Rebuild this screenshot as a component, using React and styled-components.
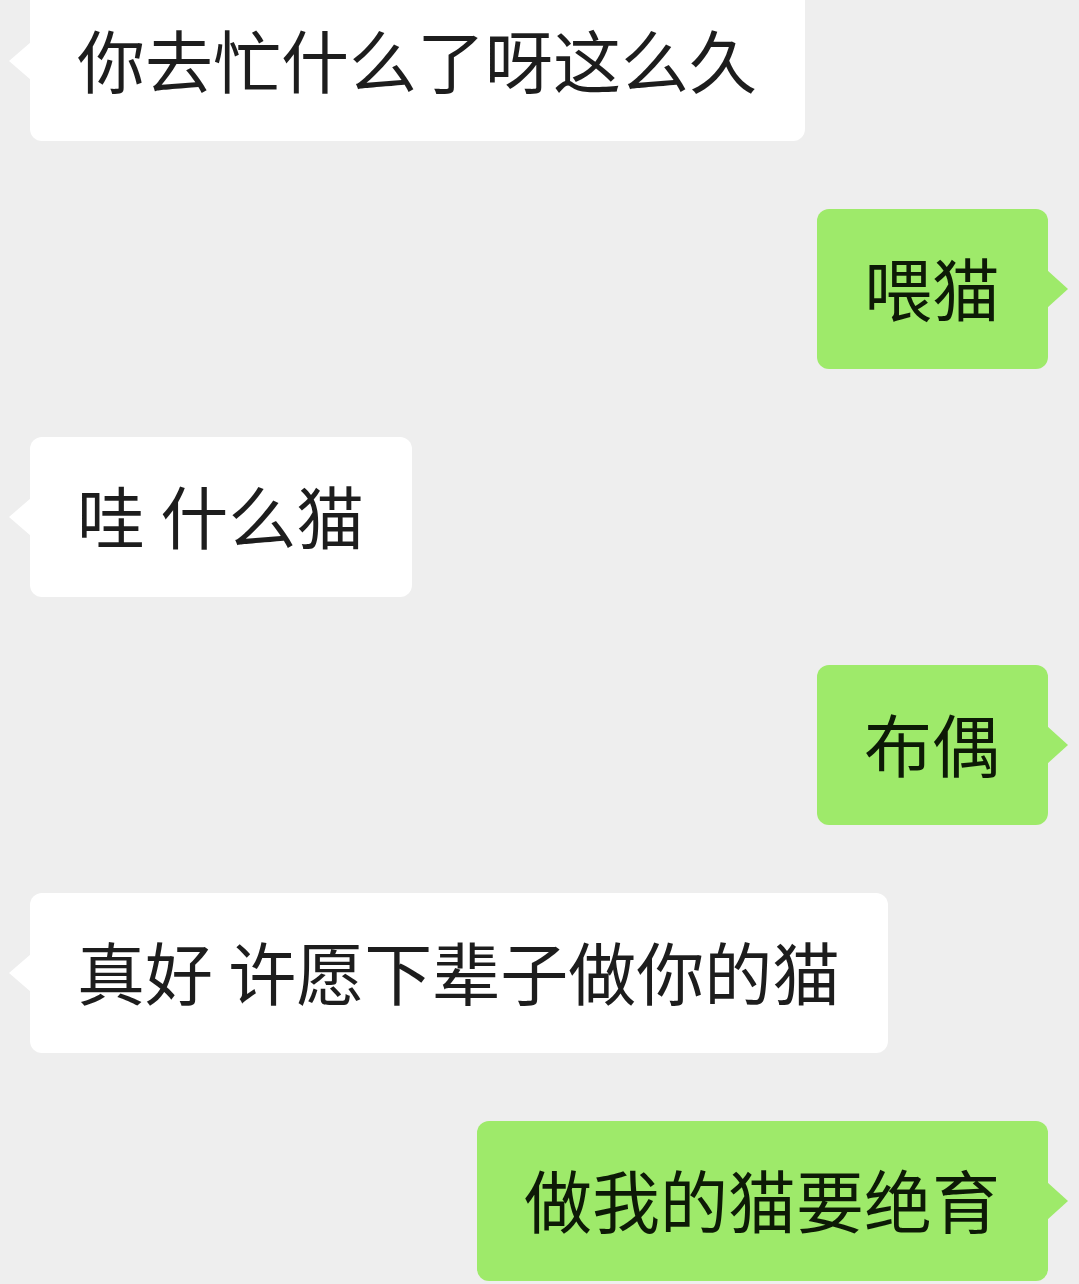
import React from 'react'
import styled, { createGlobalStyle } from 'styled-components'

const GlobalStyle = createGlobalStyle`
  html, body {
    margin: 0;
    padding: 0;
    background: #eeeeee;
  }
`

//---------------- chat column ----------------//
const Chat = styled.div`
  width: 1079px;
  height: 1284px;
  overflow: hidden;
  background: #eeeeee;
  font-family: "Noto Sans CJK SC", "Noto Sans", sans-serif;
`

const List = styled.div`
  margin-top: -19px;
  display: flex;
  flex-direction: column;
  gap: 68px;
`

const Row = styled.div`
  display: flex;
  justify-content: ${props => props.side === 'right' ? 'flex-end' : 'flex-start'};
  padding: 0 31px 0 30px;
`

//---------------- bubble + tail ----------------//
const Bubble = styled.div`
  position: relative;
  height: 160px;
  box-sizing: border-box;
  padding: 0 48px 4px 47px;
  display: flex;
  align-items: center;
  border-radius: 12px;
  background: ${props => props.side === 'right' ? '#9eea6a' : '#ffffff'};
  color: ${props => props.side === 'right' ? '#0d1a06' : '#1d1d1d'};
  font-size: 68px;
  line-height: 1;
  white-space: pre;

  &::before {
    content: "";
    position: absolute;
    top: 50%;
    margin-top: -19px;
    width: 0;
    height: 0;
    border-top: 19px solid transparent;
    border-bottom: 19px solid transparent;
    ${props => props.side === 'right'
      ? 'right: -20px; border-left: 21px solid #9eea6a;'
      : 'left: -21px; border-right: 22px solid #ffffff;'}
  }
`

const messages = [
  { id: 1, side: 'left', text: '你去忙什么了呀这么久' },
  { id: 2, side: 'right', text: '喂猫' },
  { id: 3, side: 'left', text: '哇 什么猫' },
  { id: 4, side: 'right', text: '布偶' },
  { id: 5, side: 'left', text: '真好 许愿下辈子做你的猫' },
  { id: 6, side: 'right', text: '做我的猫要绝育' },
]

const App = () => {
  return (
    <Chat>
      <GlobalStyle />
      <List>
        {messages.map((m) => (
          <Row key={m.id} side={m.side}>
            <Bubble side={m.side}>{m.text}</Bubble>
          </Row>
        ))}
      </List>
    </Chat>
  )
}

export default App
